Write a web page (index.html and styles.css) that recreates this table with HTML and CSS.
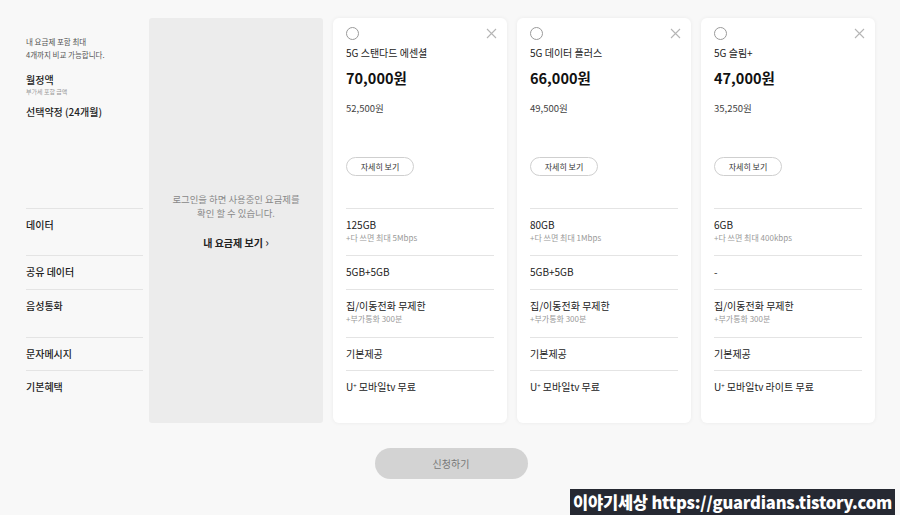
FILE: index.html
```html
<!DOCTYPE html>
<html>
<head>
  <title>요금제 비교</title>
  <link rel="stylesheet" href="styles.css">
</head>
<body>
  <div class="compare">
    <div class="labels">
      <div class="top">
        <p class="note">내 요금제 포함 최대<br>4개까지 비교 가능합니다.</p>
        <p class="label-main">월정액</p>
        <p class="label-sub">부가세 포함 금액</p>
        <p class="label-main term">선택약정 (24개월)</p>
      </div>
      <div class="row row-data"><span class="label">데이터</span></div>
      <div class="row row-share"><span class="label">공유 데이터</span></div>
      <div class="row row-voice"><span class="label">음성통화</span></div>
      <div class="row row-sms"><span class="label">문자메시지</span></div>
      <div class="row row-benefit"><span class="label">기본혜택</span></div>
    </div>

    <div class="mine">
      <p>로그인을 하면 사용중인 요금제를<br>확인 할 수 있습니다.</p>
      <a class="mine-link">내 요금제 보기 <span class="chev">&#8250;</span></a>
    </div>

    <div class="card">
      <div class="top">
        <div class="card-head">
          <span class="radio"></span>
          <svg class="close" width="11" height="11" viewBox="0 0 11 11"><path d="M1 1L10 10M10 1L1 10" stroke="#b5b5b5" stroke-width="1.1"/></svg>
        </div>
        <p class="plan-name">5G 스탠다드 에센셜</p>
        <p class="price">70,000원</p>
        <p class="discount">52,500원</p>
        <button class="detail">자세히 보기</button>
      </div>
      <div class="row row-data"><span class="val">125GB</span><span class="sub">+다 쓰면 최대 5Mbps</span></div>
      <div class="row row-share"><span class="val">5GB+5GB</span></div>
      <div class="row row-voice"><span class="val">집/이동전화 무제한</span><span class="sub">+부가통화 300분</span></div>
      <div class="row row-sms"><span class="val">기본제공</span></div>
      <div class="row row-benefit"><span class="val">U<sup>+</sup> 모바일tv 무료</span></div>
    </div>

    <div class="card">
      <div class="top">
        <div class="card-head">
          <span class="radio"></span>
          <svg class="close" width="11" height="11" viewBox="0 0 11 11"><path d="M1 1L10 10M10 1L1 10" stroke="#b5b5b5" stroke-width="1.1"/></svg>
        </div>
        <p class="plan-name">5G 데이터 플러스</p>
        <p class="price">66,000원</p>
        <p class="discount">49,500원</p>
        <button class="detail">자세히 보기</button>
      </div>
      <div class="row row-data"><span class="val">80GB</span><span class="sub">+다 쓰면 최대 1Mbps</span></div>
      <div class="row row-share"><span class="val">5GB+5GB</span></div>
      <div class="row row-voice"><span class="val">집/이동전화 무제한</span><span class="sub">+부가통화 300분</span></div>
      <div class="row row-sms"><span class="val">기본제공</span></div>
      <div class="row row-benefit"><span class="val">U<sup>+</sup> 모바일tv 무료</span></div>
    </div>

    <div class="card">
      <div class="top">
        <div class="card-head">
          <span class="radio"></span>
          <svg class="close" width="11" height="11" viewBox="0 0 11 11"><path d="M1 1L10 10M10 1L1 10" stroke="#b5b5b5" stroke-width="1.1"/></svg>
        </div>
        <p class="plan-name">5G 슬림+</p>
        <p class="price">47,000원</p>
        <p class="discount">35,250원</p>
        <button class="detail">자세히 보기</button>
      </div>
      <div class="row row-data"><span class="val">6GB</span><span class="sub">+다 쓰면 최대 400kbps</span></div>
      <div class="row row-share"><span class="val">-</span></div>
      <div class="row row-voice"><span class="val">집/이동전화 무제한</span><span class="sub">+부가통화 300분</span></div>
      <div class="row row-sms"><span class="val">기본제공</span></div>
      <div class="row row-benefit"><span class="val">U<sup>+</sup> 모바일tv 라이트 무료</span></div>
    </div>
  </div>

  <div class="actions">
    <button class="apply" disabled>신청하기</button>
  </div>

  <div class="watermark">이야기세상 https://guardians.tistory.com</div>
</body>
</html>
```

FILE: styles.css
```css
body {
  margin: 0;
  padding: 18px 25px 0 26px;
  background-color: #f8f8f8;
  font-family: "Noto Sans CJK KR", "Noto Sans", sans-serif;
  color: #222;
  height: 515px;
  box-sizing: border-box;
  position: relative;
  overflow: hidden;
}

p {
  margin: 0;
}

.compare {
  display: flex;
  gap: 10px;
}

.labels {
  width: 117px;
  margin-right: -4px;
}

.top {
  height: 190px;
  box-sizing: border-box;
}

.labels .top {
  padding-top: 17px;
}

.note {
  font-size: 7.5px;
  line-height: 13px;
  color: #555;
  margin-bottom: 12px;
}

.label-main {
  font-size: 10px;
  line-height: 14px;
  font-weight: 500;
  color: #222;
}

.label-sub {
  font-size: 6px;
  line-height: 8px;
  color: #999;
  margin-top: 1px;
}

.term {
  margin-top: 9px;
}

.row {
  border-top: 1px solid #e4e4e4;
  padding-top: 9px;
  box-sizing: border-box;
  display: flex;
  flex-direction: column;
}

.row-data { height: 47px; }
.row-share { height: 34px; }
.row-voice { height: 48px; }
.row-sms { height: 33px; }
.row-benefit { height: 53px; }

.label {
  font-size: 10px;
  line-height: 13px;
  font-weight: 500;
  color: #222;
}

.mine {
  width: 174px;
  height: 405px;
  background-color: #ececec;
  border-radius: 3px;
  display: flex;
  flex-direction: column;
  align-items: center;
  justify-content: center;
  text-align: center;
}

.mine p {
  font-size: 9.4px;
  line-height: 14px;
  color: #888;
  margin-bottom: 15px;
}

.mine-link {
  font-size: 10px;
  font-weight: 700;
  color: #222;
  line-height: 14px;
}

.chev {
  font-size: 12px;
  font-weight: 400;
}

.card {
  width: 174px;
  height: 405px;
  background-color: #fff;
  border-radius: 6px;
  box-shadow: 0 0 4px rgba(0, 0, 0, 0.06);
  padding: 0 13px;
  box-sizing: border-box;
}

.card .top {
  padding-top: 9px;
}

.card-head {
  display: flex;
  justify-content: space-between;
  align-items: flex-start;
  height: 13px;
  margin-right: -3px;
}

.radio {
  width: 11px;
  height: 11px;
  border: 1.2px solid #9a9a9a;
  border-radius: 50%;
}

.close {
  margin-top: 1px;
}

.plan-name {
  font-size: 10px;
  line-height: 14px;
  margin-top: 6px;
  color: #222;
}

.price {
  font-size: 14.5px;
  font-weight: 700;
  line-height: 20px;
  margin-top: 8px;
  color: #111;
}

.discount {
  font-size: 9.5px;
  line-height: 14px;
  margin-top: 13px;
  color: #444;
}

.detail {
  margin-top: 42px;
  width: 68px;
  height: 19px;
  border: 1px solid #cfcfcf;
  border-radius: 10px;
  background-color: #fff;
  font-family: inherit;
  font-size: 8px;
  color: #333;
  padding: 0;
}

.val {
  font-size: 10px;
  line-height: 13px;
  color: #222;
}

.val sup {
  font-size: 6px;
  vertical-align: 3px;
  line-height: 0;
}

.sub {
  font-size: 8px;
  line-height: 13px;
  color: #999;
}

.actions {
  display: flex;
  justify-content: center;
  margin-top: 25px;
}

.apply {
  width: 153px;
  height: 31px;
  border: none;
  border-radius: 16px;
  background-color: #d3d3d3;
  color: #777;
  font-family: inherit;
  font-size: 10px;
  margin-left: 1px;
}

.watermark {
  position: absolute;
  right: 5px;
  bottom: 0;
  background-color: #262932;
  color: #fff;
  font-family: "Noto Sans CJK KR", sans-serif;
  font-weight: 900;
  font-size: 16.5px;
  line-height: 26px;
  padding: 0 3px;
  letter-spacing: -0.2px;
}
```
